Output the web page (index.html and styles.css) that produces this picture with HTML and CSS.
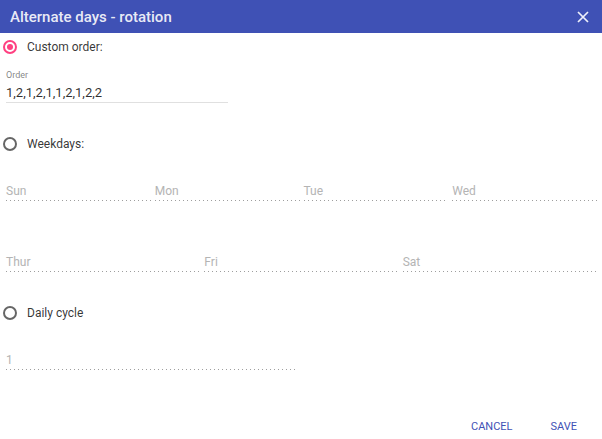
FILE: index.html
```html
<!DOCTYPE html>
<html>
<head>
<meta charset="utf-8">
<link rel="stylesheet" href="styles.css">
</head>
<body>
<div class="dialog">
  <header class="header">
    <h1 class="title">Alternate days - rotation</h1>
    <button class="close" aria-label="Close">
      <svg width="12" height="12" viewBox="0 0 12 12"><path d="M1 1L11 11M11 1L1 11" stroke="#eef0fa" stroke-width="1.7"/></svg>
    </button>
  </header>
  <div class="content">
    <label class="radio-row r1">
      <span class="radio checked"></span>
      <span class="radio-label">Custom order:</span>
    </label>
    <div class="field order-field">
      <div class="float-label">Order</div>
      <div class="value">1,2,1,2,1,1,2,1,2,2</div>
    </div>

    <label class="radio-row r2">
      <span class="radio"></span>
      <span class="radio-label">Weekdays:</span>
    </label>
    <div class="days days4">
      <div class="dis-field">Sun</div>
      <div class="dis-field">Mon</div>
      <div class="dis-field">Tue</div>
      <div class="dis-field">Wed</div>
    </div>
    <div class="days days3">
      <div class="dis-field">Thur</div>
      <div class="dis-field">Fri</div>
      <div class="dis-field">Sat</div>
    </div>

    <label class="radio-row r3">
      <span class="radio"></span>
      <span class="radio-label">Daily cycle</span>
    </label>
    <div class="dis-field cycle">1</div>
  </div>
  <footer class="actions">
    <button class="btn">CANCEL</button>
    <button class="btn">SAVE</button>
  </footer>
</div>
</body>
</html>
```

FILE: styles.css
```css
* { box-sizing: border-box; }
html, body { margin: 0; padding: 0; background: #fff; }
body { font-family: Roboto, "Noto Sans", sans-serif; color: rgba(0,0,0,.87); width: 602px; height: 439px; overflow: hidden; }

.header {
  height: 33px;
  background: #3f51b5;
  display: flex;
  align-items: center;
  justify-content: space-between;
  padding: 0 13px 0 10px;
}
.title { margin: 0; font-size: 15px; font-weight: 500; color: rgba(255,255,255,.9); letter-spacing: 0; }
.close { background: none; border: 0; padding: 0; width: 12px; height: 12px; display: flex; cursor: pointer; }

.content { padding: 2px 4px 0 6px; }

.radio-row { display: flex; align-items: center; height: 24px; margin-left: -3px; }
.r2, .r3 { margin-top: 29px; }
.radio {
  width: 14px; height: 14px; border-radius: 50%;
  border: 2px solid rgba(0,0,0,.6);
  display: inline-block; position: relative; margin-right: 10px; flex: none;
}
.radio.checked { border-color: #ff4081; }
.radio.checked::after {
  content: ""; position: absolute; left: 2px; top: 2px; width: 6px; height: 6px; border-radius: 50%; background: #ff4081;
}
.radio-label { font-size: 12px; color: rgba(0,0,0,.8); }

.field { width: 222px; margin-top: 10px; border-bottom: 1px solid #e0e0e0; }
.float-label { font-size: 9px; line-height: 12px; color: rgba(0,0,0,.5); }
.value { font-size: 13px; line-height: 18px; margin-top: 3px; color: rgba(0,0,0,.82); }

.days { display: grid; gap: 4px; width: 591px; }
.days4 { grid-template-columns: repeat(4, 1fr); margin-top: 27px; }
.days3 { grid-template-columns: repeat(3, 1fr); margin-top: 53px; }
.dis-field {
  font-size: 12px; line-height: 16px; color: #b4b4b4;
  background-image: linear-gradient(to right, rgba(0,0,0,.38) 0%, rgba(0,0,0,.38) 33%, transparent 0%);
  background-size: 4px 1px;
  background-repeat: repeat-x;
  background-position: 0 bottom;
  padding-bottom: 2px;
}
.cycle { width: 292px; margin-top: 27px; }

.actions { display: flex; justify-content: flex-end; padding-right: 25px; margin-top: 49px; gap: 38px; }
.btn { background: none; border: 0; padding: 0; font-family: Roboto, sans-serif; font-size: 11px; color: #3f51b5; line-height: 16px; cursor: pointer; }
```
